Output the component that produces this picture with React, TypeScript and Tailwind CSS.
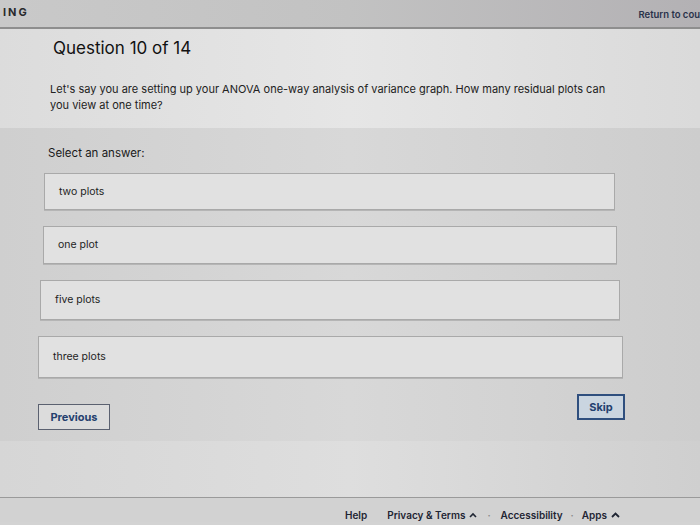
import React from "react";

const options = [
  { label: "two plots", box: "ml-[44px] mr-[85px] h-[37px]" },
  { label: "one plot", box: "ml-[43px] mr-[83px] h-[38px]" },
  { label: "five plots", box: "ml-[40px] mr-[80px] h-[40px]" },
  { label: "three plots", box: "ml-[38px] mr-[77px] h-[42px]" },
];

export default function App() {
  return (
    <div className="h-[525px] w-[700px] overflow-hidden bg-[#d3d3d3] font-['Inter',sans-serif] text-[#1d1d1f]">
      {/* Top bar */}
      <header className="flex h-[29px] items-center justify-between border-b-2 border-[#8e8e8e] bg-gradient-to-r from-[#c9c9c9] via-[#c2c2c2] to-[#b3b1b4] pl-[3px] pr-0">
        <span className="-mt-[3px] text-[11px] font-bold tracking-[0.18em] text-[#2a2a2c]">ING</span>
        <span className="mt-[4px] whitespace-nowrap text-[9.5px] font-semibold text-[#29314a]">Return to cou</span>
      </header>

      {/* Question header */}
      <section className="h-[99px] bg-gradient-to-r from-[#dcdcdc] via-[#e6e6e6] to-[#dadada] pl-[50px] pt-[8px]">
        <h1 className="pl-[3px] text-[17px] leading-[22px] font-normal text-[#111]">Question 10 of 14</h1>
        <p className="mt-[22px] w-[568px] text-[11px] leading-[16px] text-[#222]">
          Let's say you are setting up your ANOVA one-way analysis of variance graph. How many residual plots can you view at one time?
        </p>
      </section>

      {/* Answers */}
      <main className="h-[313px] bg-gradient-to-r from-[#cfcfcf] via-[#d8d8d8] to-[#cdcdcd] pt-[18px]">
        <div className="ml-[48px] text-[11.5px] leading-[14px] text-[#1a1a1a]">Select an answer:</div>
        <div className="mt-[13px] flex flex-col gap-[16px]">
          {options.map((o) => (
            <div
              key={o.label}
              className={`${o.box} flex items-center border border-[#a9a9a9] bg-[#e1e1e1] pl-[14px] text-[10.5px] text-[#1e1e1e] shadow-[0_1px_0_#b5b5b5]`}
            >
              {o.label}
            </div>
          ))}
        </div>
        <div className="mt-[16px] flex items-start justify-between pl-[38px] pr-[75px]">
          <button className="mt-[10px] h-[26px] w-[72px] border border-[#5b6170] bg-[#dcdcdc] text-[11px] font-bold text-[#24406e]">
            Previous
          </button>
          <button className="h-[26px] w-[48px] border-2 border-[#2f4f7e] bg-[#cad5e0] text-[11px] font-bold text-[#23406e]">
            Skip
          </button>
        </div>
      </main>

      {/* Lower band */}
      <div className="h-[57px] border-b border-[#9a9a9a] bg-gradient-to-r from-[#d6d6d6] via-[#dedede] to-[#cfcfcf]" />

      {/* Footer */}
      <footer className="flex items-center bg-[#d2d2d2] pl-[345px] pt-[10px] text-[10px] leading-[14px] font-semibold text-[#1f2533]">
        <span>Help</span>
        <span className="ml-[20px] flex items-center gap-[4px]">
          Privacy &amp; Terms
          <svg width="8" height="6" viewBox="0 0 8 6" fill="none" stroke="currentColor" strokeWidth="1.6">
            <path d="M1 5l3-3 3 3" />
          </svg>
        </span>
        <span className="ml-[10px] text-[#888]">·</span>
        <span className="ml-[10px]">Accessibility</span>
        <span className="ml-[8px] text-[#888]">·</span>
        <span className="ml-[8px] flex items-center gap-[4px]">
          Apps
          <svg width="9" height="6" viewBox="0 0 9 6" fill="none" stroke="currentColor" strokeWidth="1.8">
            <path d="M1 5l3.5-3.5L8 5" />
          </svg>
        </span>
      </footer>
    </div>
  );
}
